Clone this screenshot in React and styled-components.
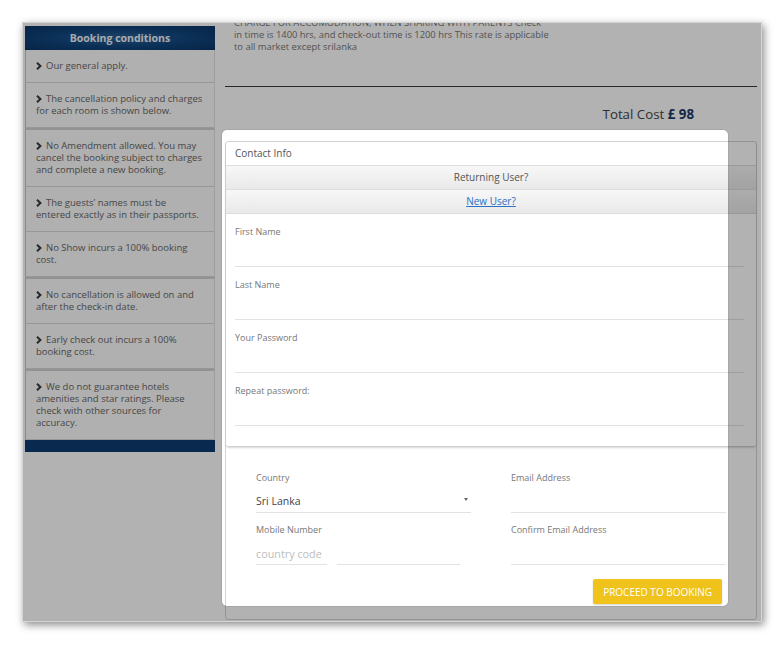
import { Fragment } from 'react';
import styled, { createGlobalStyle } from 'styled-components';

const GlobalStyle = createGlobalStyle`
  html, body {
    margin: 0;
    padding: 0;
    background: #fff;
  }
  body {
    font-family: "Open Sans", "DejaVu Sans", sans-serif;
    width: 783px;
    height: 645px;
    overflow: hidden;
  }
  * { box-sizing: border-box; }
`;

const Screen = styled.div`
  padding: 22px 0 0 22px;
`;

const Frame = styled.div`
  position: relative;
  width: 740px;
  height: 600px;
  border: 1px solid #d4d4d4;
  overflow: hidden;
  background: #fff;
  box-shadow: 2px 3px 8px rgba(0, 0, 0, 0.45);
`;

const Layout = styled.div`
  display: flex;
  align-items: flex-start;
  gap: 10px;
  padding: 0 4px 0 2px;
`;

/* ---------- sidebar ---------- */

const Sidebar = styled.aside`
  width: 190px;
  flex: none;
  margin-top: 3px;
`;

const SideHeader = styled.h3`
  margin: 0;
  height: 24px;
  line-height: 24px;
  text-align: center;
  font-size: 10.5px;
  font-weight: 700;
  color: #f2f5f9;
  background: radial-gradient(ellipse at center, #2a6299 0%, #10447c 55%, #0a3465 100%);
`;

const SideItem = styled.div`
  padding: 10px 4px 10px 10px;
  font-size: 9.5px;
  line-height: 12px;
  color: #666;
  white-space: nowrap;
  background: #fcfcfc;
  border-left: 1px solid #c6c6c6;
  border-right: 1px solid #e2e2e2;
  border-top: ${p => (p.$thick ? '2px solid #d2d2d2' : '0')};
  border-bottom: 1px solid #d8d8d8;
`;

const Chevron = styled.svg`
  width: 6px;
  height: 8px;
  margin-right: 4px;
  vertical-align: -1px;
  color: #3a3a3a;
`;

const SideFooter = styled.div`
  height: 12px;
  background: #0e3d70;
`;

/* ---------- main column ---------- */

const Main = styled.main`
  flex: 1;
  min-width: 0;
  margin-top: -6px;
`;

const Note = styled.p`
  margin: 0;
  padding: 0 9px;
  font-size: 9.4px;
  line-height: 12px;
  color: #777;
  white-space: nowrap;
`;

const Rule = styled.hr`
  margin: 33px 0 0;
  border: 0;
  height: 1px;
  background: #3a3a3a;
`;

const TotalRow = styled.div`
  margin-top: 18px;
  padding-right: 63px;
  text-align: right;
  font-size: 13.3px;
  line-height: 18px;
  color: #444;

  strong {
    color: #1c3a66;
    font-weight: 700;
  }
`;

const Panel = styled.section`
  margin-top: 18px;
  border: 1px solid #d4d4d4;
  border-radius: 3px;
  background: #fff;
`;

const Card = styled.div`
  border-bottom: 1px solid #cfcfcf;
  border-radius: 0 0 3px 3px;
  box-shadow: 0 1px 2px rgba(0, 0, 0, 0.15);
`;

const CardHeader = styled.div`
  height: 23px;
  line-height: 23px;
  padding: 0 9px;
  font-size: 10px;
  color: #555;
`;

const Toggle = styled.div`
  height: 24px;
  line-height: 23px;
  text-align: center;
  font-size: 10px;
  color: #555;
  border-top: 1px solid #dedede;
  background: linear-gradient(#f7f7f7, #e9e9e9);

  a {
    color: #2c6fc4;
    text-decoration: underline;
  }
`;

const Fields = styled.div`
  padding: 12px 12px 20px 9px;
  border-top: 1px solid #dcdcdc;
`;

const Field = styled.div`
  margin-bottom: 12px;

  &:last-child {
    margin-bottom: 0;
  }
`;

const Label = styled.label`
  display: block;
  font-size: 9px;
  line-height: 12px;
  color: #777;
`;

const LineInput = styled.input`
  display: block;
  width: ${p => p.$width || '100%'};
  height: 29px;
  padding: ${p => (p.$roomy ? '6px 0 0' : '0')};
  border: 0;
  border-bottom: 1px solid #e2e2e2;
  background: transparent;
  font-family: inherit;
  font-size: 10.8px;
  color: #444;
  outline: none;

  &::placeholder {
    color: #bdbdbd;
  }
`;

const Lower = styled.div`
  display: grid;
  grid-template-columns: 215px 215px;
  column-gap: 40px;
  row-gap: 11px;
  padding: 25px 32px 15px 30px;
`;

const Select = styled.div`
  display: flex;
  align-items: center;
  justify-content: space-between;
  height: 29px;
  padding: 6px 3px 0 0;
  border-bottom: 1px solid #e2e2e2;
  font-size: 10.5px;
  color: #444;
`;

const Caret = styled.span`
  width: 0;
  height: 0;
  border-left: 2.5px solid transparent;
  border-right: 2.5px solid transparent;
  border-top: 3px solid #666;
  margin-top: -4px;
`;

const PhoneRow = styled.div`
  display: flex;
  gap: 10px;
`;

const Actions = styled.div`
  grid-column: 1 / -1;
  display: flex;
  justify-content: flex-end;
  margin-top: 3px;
  padding-right: 4px;
`;

const Button = styled.button`
  height: 25px;
  padding: 0 10px;
  border: 0;
  border-radius: 2px;
  background: #efc31b;
  color: #fff;
  font-family: inherit;
  font-size: 10px;
  text-transform: uppercase;
  box-shadow: 0 1px 2px rgba(0, 0, 0, 0.18);
`;

/* ---------- tour highlight ---------- */

const Spotlight = styled.div`
  position: absolute;
  left: 199px;
  top: 107px;
  width: 506px;
  height: 476px;
  border-radius: 5px;
  pointer-events: none;
  box-shadow: 0 0 0 1px rgba(0, 0, 0, 0.06), 0 0 0 2000px rgba(0, 0, 0, 0.3);
`;

const conditions = [
  { lines: ['Our general apply.'] },
  { lines: ['The cancellation policy and charges', 'for each room is shown below.'] },
  {
    lines: ['No Amendment allowed. You may', 'cancel the booking subject to charges', 'and complete a new booking.'],
    thick: true,
  },
  { lines: ['The guests’ names must be', 'entered exactly as in their passports.'] },
  { lines: ['No Show incurs a 100% booking', 'cost.'] },
  { lines: ['No cancellation is allowed on and', 'after the check-in date.'], thick: true },
  { lines: ['Early check out incurs a 100%', 'booking cost.'] },
  {
    lines: ['We do not guarantee hotels', 'amenities and star ratings. Please', 'check with other sources for', 'accuracy.'],
    thick: true,
  },
];

const accountFields = ['First Name', 'Last Name', 'Your Password', 'Repeat password:'];

function ChevronIcon() {
  return (
    <Chevron viewBox="0 0 6 8">
      <path d="M1 0.8 L4.4 4 L1 7.2" fill="none" stroke="currentColor" strokeWidth="2" />
    </Chevron>
  );
}

export default function App() {
  return (
    <>
      <GlobalStyle />
      <Screen>
        <Frame>
          <Layout>
            <Sidebar>
              <SideHeader>Booking conditions</SideHeader>
              {conditions.map((c, i) => (
                <SideItem key={i} $thick={c.thick}>
                  <ChevronIcon />
                  {c.lines.map((line, j) => (
                    <Fragment key={j}>
                      {j > 0 && <br />}
                      {line}
                    </Fragment>
                  ))}
                </SideItem>
              ))}
              <SideFooter />
            </Sidebar>

            <Main>
              <Note>
                CHARGE FOR ACCOMODATION, WHEN SHARING WITH PARENTS Check
                <br />
                in time is 1400 hrs, and check-out time is 1200 hrs This rate is applicable
                <br />
                to all market except srilanka
              </Note>
              <Rule />
              <TotalRow>
                Total Cost <strong>£ 98</strong>
              </TotalRow>

              <Panel>
                <Card>
                  <CardHeader>Contact Info</CardHeader>
                  <Toggle>Returning User?</Toggle>
                  <Toggle>
                    <a href="#new">New User?</a>
                  </Toggle>
                  <Fields>
                    {accountFields.map(name => (
                      <Field key={name}>
                        <Label>{name}</Label>
                        <LineInput type={name.includes('assword') ? 'password' : 'text'} />
                      </Field>
                    ))}
                  </Fields>
                </Card>

                <Lower>
                  <div>
                    <Label>Country</Label>
                    <Select>
                      Sri Lanka
                      <Caret />
                    </Select>
                  </div>
                  <div>
                    <Label>Email Address</Label>
                    <LineInput $roomy />
                  </div>
                  <div>
                    <Label>Mobile Number</Label>
                    <PhoneRow>
                      <LineInput $roomy $width="71px" placeholder="country code" />
                      <LineInput $roomy $width="123px" />
                    </PhoneRow>
                  </div>
                  <div>
                    <Label>Confirm Email Address</Label>
                    <LineInput $roomy />
                  </div>
                  <Actions>
                    <Button>Proceed to booking</Button>
                  </Actions>
                </Lower>
              </Panel>
            </Main>
          </Layout>
          <Spotlight />
        </Frame>
      </Screen>
    </>
  );
}
